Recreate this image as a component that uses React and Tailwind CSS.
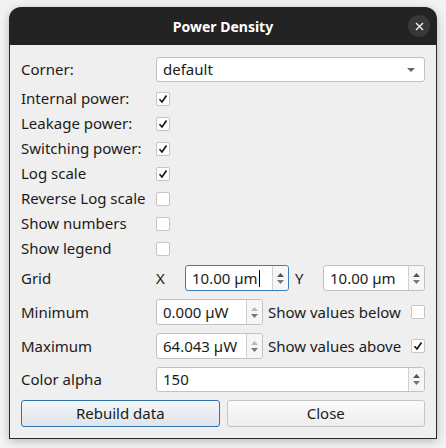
import React from 'react';

const font = { fontFamily: '"Noto Sans", "DejaVu Sans", sans-serif' };

function Check({ checked }) {
  return (
    <span className="w-[14px] h-[14px] border border-[#c4c4c4] bg-white rounded-[2px] flex items-center justify-center">
      {checked && (
        <svg width="10" height="10" viewBox="0 0 10 10">
          <path d="M1.5 5.2 L4 8 L8.5 1.5" fill="none" stroke="#111" strokeWidth="1.6" />
        </svg>
      )}
    </span>
  );
}

function Arrows({ dimUp }) {
  return (
    <div className="w-[16px] h-full border-l border-[#d0d0d0] flex flex-col items-center justify-center gap-[3px] bg-[#f6f6f6] rounded-r-[3px]">
      <svg width="7" height="4" viewBox="0 0 7 4"><path d="M0 4 L3.5 0 L7 4 Z" fill={dimUp ? '#b8b8b8' : '#555'} /></svg>
      <svg width="7" height="4" viewBox="0 0 7 4"><path d="M0 0 L3.5 4 L7 0 Z" fill="#777" /></svg>
    </div>
  );
}

function Spin({ value, focused, className, dimUp, cursor }) {
  return (
    <div className={`flex items-stretch bg-white rounded-[3px] border ${focused ? 'border-[#3a7cc0]' : 'border-[#c2c2c2]'} ${className}`}>
      <div className="flex-1 flex items-center pl-[6px] text-[#1b1b1b]">
        {value}
        {cursor && <span className="inline-block w-px h-[17px] bg-black ml-[1px]" />}
      </div>
      <Arrows dimUp={dimUp} />
    </div>
  );
}

const checks = [
  ['Internal power:', true],
  ['Leakage power:', true],
  ['Switching power:', true],
  ['Log scale', true],
  ['Reverse Log scale', false],
  ['Show numbers', false],
  ['Show legend', false],
];

export default function App() {
  return (
    <div className="w-[446px] h-[448px] bg-[#f3f3f3] pt-[7px] pl-[9px]" style={font}>
      <div className="w-[428px] rounded-t-[12px] shadow-[0_2px_10px_rgba(0,0,0,0.25)]">
        <div className="h-[38px] bg-[#232323] rounded-t-[12px] flex items-center justify-center relative">
          <span className="text-white font-bold text-[14px]">Power Density</span>
          <span className="absolute right-[7px] top-[8px] w-[22px] h-[22px] rounded-full bg-[#383838] flex items-center justify-center">
            <svg width="9" height="9" viewBox="0 0 9 9">
              <path d="M1 1 L8 8 M8 1 L1 8" stroke="#f0f0f0" strokeWidth="1.4" />
            </svg>
          </span>
        </div>
        <div className="h-[394px] bg-[#efefef] border border-t-0 border-[#2b2b2b] px-[11px] pt-[12px] text-[15px] text-[#1b1b1b] flex flex-col">
          <div className="flex items-center h-[25px]">
            <span className="w-[135px]">Corner:</span>
            <div className="flex-1 h-[25px] bg-white border border-[#c2c2c2] rounded-[3px] flex items-center pl-[6px] pr-[9px]">
              <span className="flex-1">default</span>
              <svg width="8" height="4" viewBox="0 0 8 4"><path d="M0 0 L4 4 L8 0 Z" fill="#666" /></svg>
            </div>
          </div>
          <div className="mt-[4px] flex flex-col">
            {checks.map(([label, c]) => (
              <div key={label} className="flex items-center h-[25px]">
                <span className="w-[135px] whitespace-nowrap">{label}</span>
                <Check checked={c} />
              </div>
            ))}
          </div>
          <div className="mt-[4px] flex items-center h-[26px]">
            <span className="w-[135px]">Grid</span>
            <span className="w-[29px]">X</span>
            <Spin value="10.00 µm" focused cursor className="w-[104px] h-[26px]" />
            <span className="ml-[6px] w-[28px]">Y</span>
            <Spin value="10.00 µm" className="flex-1 h-[26px]" />
          </div>
          <div className="mt-[8px] flex items-center h-[26px]">
            <span className="w-[135px]">Minimum</span>
            <Spin value="0.000 µW" dimUp className="w-[107px] h-[26px]" />
            <span className="ml-[5px] flex-1">Show values below</span>
            <Check checked={false} />
          </div>
          <div className="mt-[8px] flex items-center h-[26px]">
            <span className="w-[135px]">Maximum</span>
            <Spin value="64.043 µW" dimUp className="w-[107px] h-[26px]" />
            <span className="ml-[5px] flex-1">Show values above</span>
            <Check checked />
          </div>
          <div className="mt-[8px] flex items-center h-[25px]">
            <span className="w-[135px]">Color alpha</span>
            <Spin value="150" className="flex-1 h-[25px]" />
          </div>
          <div className="mt-[8px] flex gap-[7px] h-[27px]">
            <button className="flex-1 rounded-[3px] border border-[#2f74ad] bg-gradient-to-b from-[#f5f7f9] to-[#dde4ea] text-[#1b1b1b]">Rebuild data</button>
            <button className="flex-1 rounded-[3px] border border-[#c4c4c4] bg-gradient-to-b from-[#fbfbfb] to-[#ededed] text-[#1b1b1b]">Close</button>
          </div>
        </div>
      </div>
    </div>
  );
}
